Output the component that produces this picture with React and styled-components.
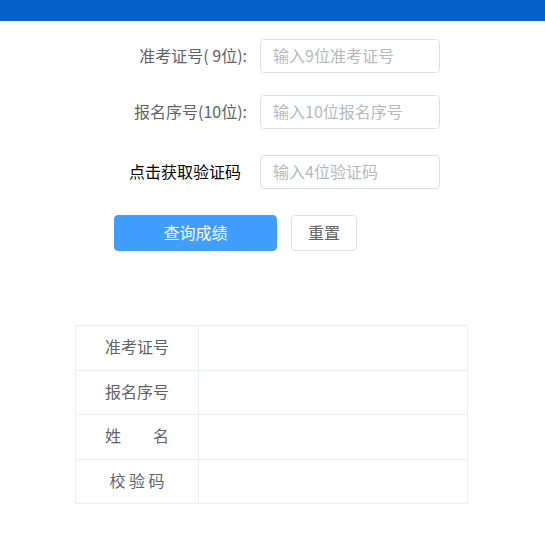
import React from "react";
import styled, { createGlobalStyle } from "styled-components";

const Global = createGlobalStyle`
  html, body { margin: 0; padding: 0; background: #fff; }
  body { font-family: "Noto Sans CJK SC", "Liberation Sans", sans-serif; }
  * { box-sizing: border-box; }
`;

const Header = styled.div`
  height: 21px;
  background: #0660cc;
`;

const Form = styled.div`
  display: grid;
  grid-template-columns: 247px 180px;
  column-gap: 13px;
  padding-top: 18px;
`;

const Row = styled.div`
  display: contents;
`;

const Label = styled.div`
  grid-column: 1;
  height: 34px;
  margin-bottom: ${(p) => p.$mb}px;
  display: flex;
  align-items: center;
  justify-content: flex-end;
  font-size: 16px;
  color: ${(p) => (p.$dark ? "#000" : "#606266")};
  padding-right: ${(p) => (p.$dark ? 6 : 0)}px;
  padding-bottom: 2px;
  white-space: nowrap;
  cursor: ${(p) => (p.$dark ? "pointer" : "default")};
`;

const Input = styled.input`
  grid-column: 2;
  height: 34px;
  margin-bottom: ${(p) => p.$mb}px;
  width: 180px;
  border: 1px solid #dcdfe6;
  border-radius: 4px;
  padding: 0 12px 2px;
  font-family: inherit;
  font-size: 16px;
  color: #606266;
  outline: none;
  &::placeholder { color: #b4b8c0; }
`;

const Buttons = styled.div`
  display: flex;
  gap: 14px;
  padding-left: 114px;
`;

const Button = styled.button`
  height: 36px;
  width: ${(p) => p.$w}px;
  border-radius: 4px;
  font-family: inherit;
  font-size: 16px;
  padding: 0 0 3px;
  cursor: pointer;
  border: 1px solid ${(p) => (p.$primary ? "#409eff" : "#dcdfe6")};
  background: ${(p) => (p.$primary ? "#409eff" : "#fff")};
  color: ${(p) => (p.$primary ? "#fff" : "#606266")};
`;

const Table = styled.table`
  margin: 74px 0 0 75px;
  width: 393px;
  border-collapse: collapse;
  font-size: 16px;
  color: #606266;
`;

const Th = styled.td`
  width: 123px;
  height: 44.5px;
  border: 1px solid #ebeef5;
  text-align: center;
  white-space: pre;
  padding: 0 0 3px;
`;

const Td = styled.td`
  border: 1px solid #ebeef5;
  padding: 0;
`;

const rows = ["准考证号", "报名序号", "姓\u3000\u3000名", "校 验 码"];

export default function App() {
  return (
    <>
      <Global />
      <Header />
      <Form>
        <Row>
          <Label $mb={22}>准考证号( 9位):</Label>
          <Input $mb={22} placeholder="输入9位准考证号" />
        </Row>
        <Row>
          <Label $mb={26}>报名序号(10位):</Label>
          <Input $mb={26} placeholder="输入10位报名序号" />
        </Row>
        <Row>
          <Label $mb={26} $dark>点击获取验证码</Label>
          <Input $mb={26} placeholder="输入4位验证码" />
        </Row>
      </Form>
      <Buttons>
        <Button $primary $w={163}>查询成绩</Button>
        <Button $w={66}>重置</Button>
      </Buttons>
      <Table>
        <tbody>
          {rows.map((r) => (
            <tr key={r}>
              <Th>{r}</Th>
              <Td />
            </tr>
          ))}
        </tbody>
      </Table>
    </>
  );
}
